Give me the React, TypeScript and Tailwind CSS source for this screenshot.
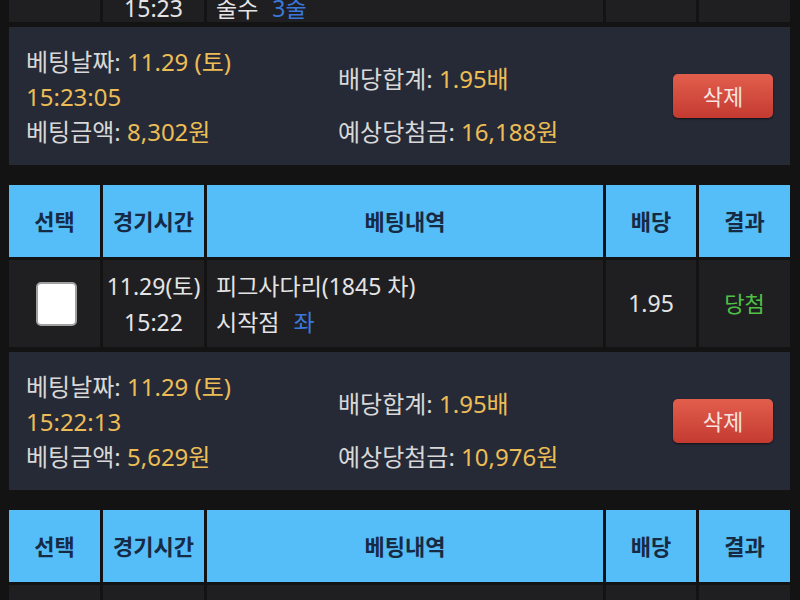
import React from "react";

type Bet = {
  date: string;
  time: string;
  game: string;
  pickLabel: string;
  pick: string;
  odds: string;
  result: string;
  betDate: string;
  betTime: string;
  amount: string;
  total: string;
  expected: string;
};

const COLS = "grid grid-cols-[91px_101px_396px_90px_91px] gap-x-[3px]";

function Header() {
  const heads = ["선택", "경기시간", "베팅내역", "배당", "결과"];
  return (
    <div className={COLS}>
      {heads.map((h) => (
        <div
          key={h}
          className="h-[72px] bg-[#55bdf7] flex items-center justify-center text-[22px] font-bold text-[#172a44]"
        >
          {h}
        </div>
      ))}
    </div>
  );
}

function Row({ bet }: { bet: Bet }) {
  return (
    <div className={COLS}>
      <div className="h-[87px] bg-[#1f1f22] flex items-center justify-center">
        <div className="w-[41px] h-[44px] bg-white rounded-[5px] border-2 border-[#a0a0a0] ml-[3px]" />
      </div>
      <div className="h-[87px] bg-[#1f1f22] flex flex-col items-center justify-center text-[23px] leading-[36px] text-[#e4e4e4]">
        <div>{bet.date}</div>
        <div>{bet.time}</div>
      </div>
      <div className="h-[87px] bg-[#1f1f22] flex flex-col justify-center pl-[9px] text-[23px] leading-[36px] text-[#e4e4e4]">
        <div>{bet.game}</div>
        <div>
          {bet.pickLabel}
          <span className="ml-[14px] text-[#3a78dc]">{bet.pick}</span>
        </div>
      </div>
      <div className="h-[87px] bg-[#1f1f22] flex items-center justify-center text-[23px] text-[#e4e4e4]">
        {bet.odds}
      </div>
      <div className="h-[87px] bg-[#1f1f22] flex items-center justify-center text-[22px] text-[#4fbf45]">
        {bet.result}
      </div>
    </div>
  );
}

function Panel({ bet }: { bet: Bet }) {
  return (
    <div className="h-[138px] bg-[#262a37] flex items-center pl-[17px] pr-[17px]">
      <div className="grid grid-cols-[312px_auto] items-center text-[24px] leading-[35px] text-[#d8d8d8]">
        <div>
          <div>
            베팅날짜: <span className="text-[#ecbd55]">{bet.betDate}</span>
          </div>
          <div className="text-[#ecbd55]">{bet.betTime}</div>
        </div>
        <div>
          배당합계: <span className="text-[#ecbd55]">{bet.total}</span>
        </div>
        <div>
          베팅금액: <span className="text-[#ecbd55]">{bet.amount}</span>
        </div>
        <div>
          예상당첨금: <span className="text-[#ecbd55]">{bet.expected}</span>
        </div>
      </div>
      <button className="ml-auto w-[100px] h-[44px] rounded-[5px] bg-gradient-to-b from-[#e25e4c] to-[#c43a31] text-[#f6e4e0] text-[22px] shadow-[0_1px_2px_rgba(0,0,0,0.6)]">
        삭제
      </button>
    </div>
  );
}

const bets: Bet[] = [
  {
    date: "11.29(토)",
    time: "15:22",
    game: "피그사다리(1845 차)",
    pickLabel: "시작점",
    pick: "좌",
    odds: "1.95",
    result: "당첨",
    betDate: "11.29 (토)",
    betTime: "15:22:13",
    amount: "5,629원",
    total: "1.95배",
    expected: "10,976원",
  },
];

export default function App() {
  return (
    <div className="w-[800px] h-[600px] overflow-hidden bg-[#131313] pl-[9px] pr-[10px] font-['Noto_Sans','Noto_Sans_CJK_KR',sans-serif]">
      {/* partially visible previous row */}
      <div className={COLS}>
        <div className="h-[22px] bg-[#1f1f22]" />
        <div className="h-[22px] bg-[#1f1f22] overflow-hidden flex justify-center">
          <div className="-mt-[6px] leading-[28px] text-[23px] text-[#e4e4e4]">15:23</div>
        </div>
        <div className="h-[22px] bg-[#1f1f22] overflow-hidden pl-[9px]">
          <div className="-mt-[6px] leading-[28px] text-[23px] text-[#e4e4e4]">
            줄수<span className="ml-[14px] text-[#3a78dc]">3줄</span>
          </div>
        </div>
        <div className="h-[22px] bg-[#1f1f22]" />
        <div className="h-[22px] bg-[#1f1f22]" />
      </div>
      <div className="mt-[5px]">
        <Panel
          bet={{
            ...bets[0],
            betDate: "11.29 (토)",
            betTime: "15:23:05",
            amount: "8,302원",
            total: "1.95배",
            expected: "16,188원",
          }}
        />
      </div>
      <div className="mt-[20px]">
        <Header />
      </div>
      <div className="mt-[3px]">
        <Row bet={bets[0]} />
      </div>
      <div className="mt-[5px]">
        <Panel bet={bets[0]} />
      </div>
      <div className="mt-[20px]">
        <Header />
      </div>
      <div className="mt-[3px]">
        <Row
          bet={{
            ...bets[0],
            time: "15:21",
            game: "피그사다리(1844 차)",
          }}
        />
      </div>
    </div>
  );
}
